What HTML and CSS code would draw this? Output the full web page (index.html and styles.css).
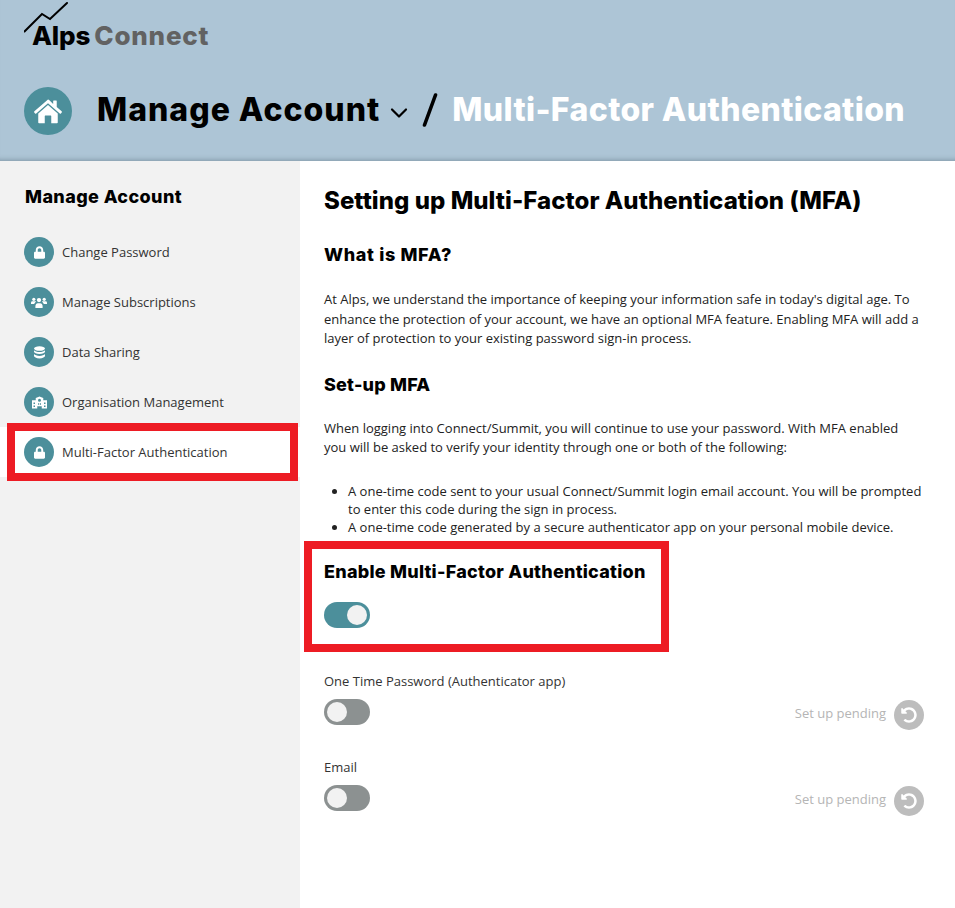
FILE: index.html
```html
<!DOCTYPE html>
<html lang="en">
<head>
<meta charset="utf-8">
<title>Multi-Factor Authentication</title>
<link rel="stylesheet" href="styles.css">
</head>
<body>
<header class="header">
  <div class="logo">
    <svg class="logo-line" viewBox="0 0 46 34" width="46" height="34"><path d="M0.500 31.500 L18 14 L26 19 L43 3" fill="none" stroke="#000" stroke-width="2" stroke-linecap="round" stroke-linejoin="miter"/></svg>
    <span class="logo-alps">Alps</span><span class="logo-connect">Connect</span>
  </div>
  <div class="crumbs">
    <span class="home"><svg viewBox="0 0 576 512" width="30" height="26"><path fill="#fff" d="M288 30 L20 262 q-12 11 -3 22 l17 19 q10 10 22 1 L288 105 L520 304 q12 9 22 -1 l17 -19 q9 -11 -3 -22 L460 178 V60 q0 -10 -10 -10 h-50 q-10 0 -10 10 v58 L310 38 q-11 -10 -22 -8z M288 140 L96 305 V480 q0 16 16 16 h112 V352 q0 -8 8 -8 h112 q8 0 8 8 V496 h112 q16 0 16 -16 V305z"/></svg></span>
    <span class="crumb-dark">Manage Account</span>
    <svg class="chev" viewBox="0 0 18 12" width="18" height="12"><path d="M2 2.500 L9 9.500 L16 2.500" fill="none" stroke="#000" stroke-width="2.200" stroke-linecap="round" stroke-linejoin="round"/></svg>
    <svg class="slash" viewBox="0 0 16 34" width="16" height="34"><path d="M13.500 2 L2.500 32" fill="none" stroke="#000" stroke-width="3.600" stroke-linecap="round"/></svg>
    <span class="crumb-light">Multi-Factor Authentication</span>
  </div>
</header>
<div class="body-wrap">
  <aside class="side">
    <h2 class="side-title">Manage Account</h2>
    <nav class="side-nav">
      <a class="side-item"><span class="dot"><svg viewBox="0 0 448 512" width="11" height="13"><path fill="#fff" d="M400 224h-24v-72C376 68 308 0 224 0S72 68 72 152v72H48c-26 0-48 22-48 48v192c0 26 22 48 48 48h352c26 0 48-22 48-48V272c0-26-22-48-48-48zm-104 0H152v-72c0-40 32-72 72-72s72 32 72 72v72z"/></svg></span>Change Password</a>
      <a class="side-item"><span class="dot"><svg viewBox="0 0 20 16" width="16" height="13"><g fill="#fff"><circle cx="10" cy="5" r="2.700"/><path d="M5.500 15v-2.500C5.500 10 7 8.800 8.500 8.800h3c1.500 0 3 1.200 3 3.700V15z"/><circle cx="3.500" cy="4" r="2"/><circle cx="16.500" cy="4" r="2"/><path d="M0 10V8.500C0 7 1 6.500 2 6.500h3c.6 0 1 .2 1.300.5C5 7.800 4.300 9 4 10zM20 10V8.500C20 7 19 6.500 18 6.500h-3c-.6 0-1 .2-1.300.5 1.300.8 2 2 2.300 3z"/></g></svg></span>Manage Subscriptions</a>
      <a class="side-item"><span class="dot"><svg viewBox="0 0 14 16" width="11" height="13"><g fill="#fff"><ellipse cx="7" cy="3" rx="7" ry="2.800"/><path d="M0 5v2c0 1.500 3 2.800 7 2.800S14 8.500 14 7V5c-1 1.500-4 2.300-7 2.300S1 6.500 0 5z"/><path d="M0 10v2.500C0 14 3 15.500 7 15.500s7-1.500 7-3V10c-1 1.500-4 2.300-7 2.300S1 11.500 0 10z"/></g></svg></span>Data Sharing</a>
      <a class="side-item"><span class="dot"><svg viewBox="0 0 20 16" width="15" height="13"><path fill="#fff" fill-rule="evenodd" d="M0 5h5V2l5-2 5 2v3h5v11h-7v-3H7v3H0zM10 3a2 2 0 100 4 2 2 0 000-4zM2 8v2h2V8zM2 12v2h2v-2zM16 8v2h2V8zM16 12v2h2v-2zM8 9v2h1.500V9zM10.500 9v2H12V9z"/></svg></span>Organisation Management</a>
      <a class="side-item is-active"><span class="dot"><svg viewBox="0 0 448 512" width="11" height="13"><path fill="#fff" d="M400 224h-24v-72C376 68 308 0 224 0S72 68 72 152v72H48c-26 0-48 22-48 48v192c0 26 22 48 48 48h352c26 0 48-22 48-48V272c0-26-22-48-48-48zm-104 0H152v-72c0-40 32-72 72-72s72 32 72 72v72z"/></svg></span>Multi-Factor Authentication</a>
    </nav>
    <div class="mark mark-side"></div>
  </aside>
  <main class="main">
    <h1 class="page-title">Setting up Multi-Factor Authentication (MFA)</h1>
    <h2 class="sub first">What is MFA?</h2>
    <p class="para para-a">At Alps, we understand the importance of keeping your information safe in today's digital age. To enhance the protection of your account, we have an optional MFA feature. Enabling MFA will add a layer of protection to your existing password sign-in process.</p>
    <h2 class="sub second">Set-up MFA</h2>
    <p class="para para-b">When logging into Connect/Summit, you will continue to use your password. With MFA enabled you will be asked to verify your identity through one or both of the following:</p>
    <ul class="list">
      <li>A one-time code sent to your usual Connect/Summit login email account. You will be prompted to enter this code during the sign in process.</li>
      <li>A one-time code generated by a secure authenticator app on your personal mobile device.</li>
    </ul>
    <section class="enable">
      <h3 class="enable-title">Enable Multi-Factor Authentication</h3>
      <span class="toggle on"></span>
      <div class="mark mark-main"></div>
    </section>
    <section class="opt opt-first">
      <div class="opt-label">One Time Password (Authenticator app)</div>
      <div class="opt-row">
        <span class="toggle"></span>
        <span class="pending"><span class="pending-text">Set up pending</span><span class="undo"><svg viewBox="0 0 512 512" width="16" height="16"><path fill="#fff" d="M255 8C189 8 128 35 84 78L48 42C33 27 8 38 8 59v134c0 13 11 24 24 24h134c21 0 32-26 17-41l-42-42c30-28 70-45 113-45 92 0 168 74 168 167 0 93-74 168-167 168-41 0-80-15-110-41-5-4-12-4-17 1l-40 40c-5 5-5 13 1 18 44 40 103 64 166 64 137 0 248-111 248-248S392 8 255 8z"/></svg></span></span>
      </div>
    </section>
    <section class="opt">
      <div class="opt-label">Email</div>
      <div class="opt-row">
        <span class="toggle"></span>
        <span class="pending"><span class="pending-text">Set up pending</span><span class="undo"><svg viewBox="0 0 512 512" width="16" height="16"><path fill="#fff" d="M255 8C189 8 128 35 84 78L48 42C33 27 8 38 8 59v134c0 13 11 24 24 24h134c21 0 32-26 17-41l-42-42c30-28 70-45 113-45 92 0 168 74 168 167 0 93-74 168-167 168-41 0-80-15-110-41-5-4-12-4-17 1l-40 40c-5 5-5 13 1 18 44 40 103 64 166 64 137 0 248-111 248-248S392 8 255 8z"/></svg></span></span>
      </div>
    </section>
  </main>
</div>
</body>
</html>
```
FILE: styles.css
```css
* { box-sizing: border-box; }
html, body { margin: 0; padding: 0; }
body { width: 955px; height: 908px; overflow: hidden; background: #fff; font-family: "Open Sans", sans-serif; font-size: 13px; color: #222; }
h1, h2, h3, .logo, .crumbs { font-family: "Inter", sans-serif; font-weight: 800; color: #000; }
.header { height: 161px; background: #adc5d6; padding: 0 0 0 24px; box-shadow: inset 0 -6px 5px -5px rgba(70,90,105,.45); display: flex; flex-direction: column; }
.logo { position: relative; height: 87px; padding-top: 18px; font-size: 26px; line-height: 36px; white-space: nowrap; }
.logo-line { position: absolute; left: 0; top: 0; }
.logo-alps { color: #000; margin-left: 8px; letter-spacing: -.15px; }
.logo-connect { color: #626262; margin-left: 4px; letter-spacing: .8px; }
.crumbs { display: flex; align-items: center; height: 48px; font-size: 32px; white-space: nowrap; }
.home { width: 48px; height: 48px; border-radius: 50%; background: #4c8f9b; display: flex; align-items: center; justify-content: center; margin-right: 25px; }
.crumb-dark { color: #000; margin-bottom: 3px; letter-spacing: 1px; }
.chev { margin: 4px 14px 0 10px; }
.slash { margin-right: 14px; margin-bottom: 2px; }
.crumb-light { color: #fff; margin-bottom: 3px; letter-spacing: .37px; }
.body-wrap { display: flex; height: 747px; }
.side { position: relative; width: 300px; background: #f2f2f2; padding-top: 24px; flex: none; }
.side-title { margin: 0 0 0 25px; font-size: 18px; line-height: 24px; letter-spacing: .4px; }
.side-nav { margin-top: 18px; display: flex; flex-direction: column; }
.side-item { height: 50px; padding-left: 24px; display: flex; align-items: center; gap: 8px; color: #333; }
.side-item.is-active { background: #fff; }
.dot { width: 30px; height: 30px; border-radius: 50%; background: #4c8f9b; display: flex; align-items: center; justify-content: center; }
.mark { position: absolute; border: 8px solid #ed1c24; pointer-events: none; }
.mark-side { left: 7px; top: 262px; width: 291px; height: 58px; }
.main { flex: 1; padding: 0 31px 0 24px; }
.page-title { margin: 24px 0 0; font-size: 24px; line-height: 32px; letter-spacing: .05px; }
.sub { margin: 0; font-size: 18px; line-height: 24px; }
.sub.first { margin-top: 26px; letter-spacing: .65px; }
.sub.second { margin-top: 24px; letter-spacing: .2px; }
.para { max-width: 597px; line-height: 19.500px; }
.para-a { margin: 23px 0 0; }
.para-b { margin: 22px 0 0; }
.list { margin: 24px 0 0; padding-left: 24px; line-height: 18px; }
.enable { position: relative; height: 92px; margin-top: 5px; padding-top: 19px; }
.enable-title { margin: 0; font-size: 18px; line-height: 24px; letter-spacing: .24px; }
.mark-main { left: -20px; top: 0; width: 365px; height: 111px; }
.toggle { display: block; position: relative; width: 46px; height: 26px; border-radius: 13px; background: #8c9191; }
.toggle::after { content: ""; position: absolute; left: 3px; top: 3px; width: 20px; height: 20px; border-radius: 50%; background: #f2f2f2; }
.toggle.on { background: #4c8f9b; margin-top: 18px; }
.toggle.on::after { left: 23px; }
.opt-first { margin-top: 39px; }
.opt { height: 86px; }
.opt-label { line-height: 18px; color: #333; }
.opt-row { display: flex; justify-content: space-between; align-items: flex-start; margin-top: 9px; }
.pending { display: flex; align-items: center; gap: 8px; color: #b5b5b5; margin-top: 1px; }
.pending-text { margin-bottom: 4px; }
.undo { width: 30px; height: 30px; border-radius: 50%; background: #bdbdbd; display: flex; align-items: center; justify-content: center; }
```
